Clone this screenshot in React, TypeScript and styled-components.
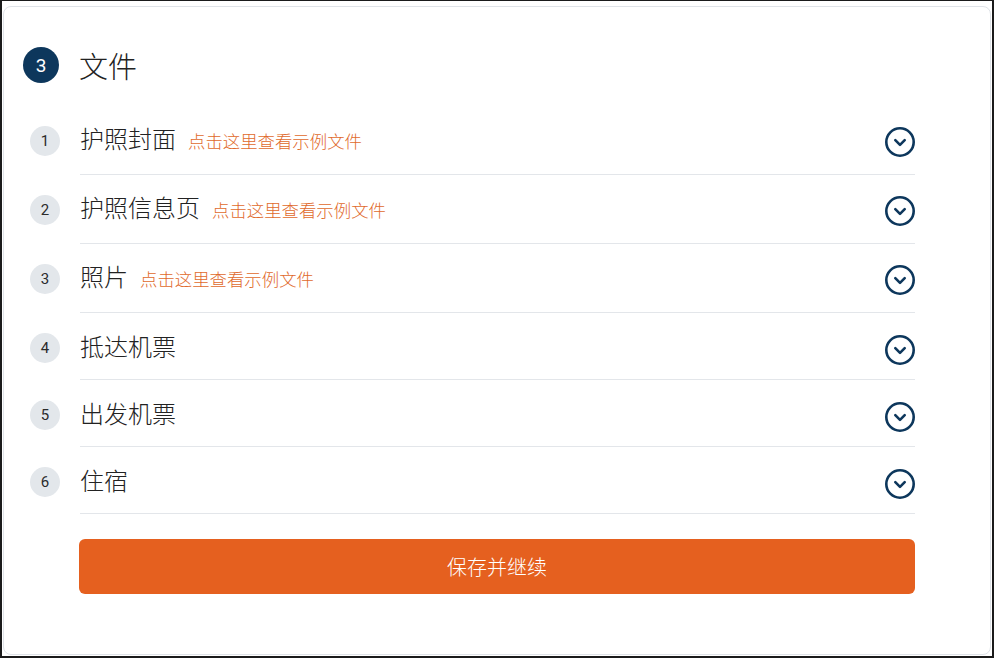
import React from "react";
import styled, { createGlobalStyle } from "styled-components";

const Global = createGlobalStyle`
  html, body { margin: 0; padding: 0; background: #ffffff; }
  body { font-family: "Noto Sans CJK SC", "Noto Sans", Roboto, sans-serif; }
  * { box-sizing: border-box; }
`;

const Frame = styled.div`
  width: 994px;
  height: 658px;
  border: 2px solid #1b1b1b;
  border-top-width: 1px;
  background: #ffffff;
  padding: 5px 1px 1px 1px;
  display: flex;
`;

const Card = styled.section`
  flex: 1;
  border: 1px solid #dfe3e8;
  border-radius: 8px;
  background: #ffffff;
  padding: 40px 75px 0 19px;
  display: flex;
  flex-direction: column;
`;

const Header = styled.div`
  display: flex;
  align-items: center;
  gap: 21px;
  height: 36px;
  margin-bottom: 23px;
`;

const StepBadge = styled.div`
  width: 36px;
  height: 36px;
  border-radius: 50%;
  background: #0d375c;
  color: #ffffff;
  display: flex;
  align-items: center;
  justify-content: center;
  font-family: Roboto, "Liberation Sans", sans-serif;
  font-size: 19px;
  font-weight: 400;
`;

const Title = styled.h2`
  margin: 0 0 0 -1px;
  font-size: 29px;
  font-weight: 300;
  color: #222;
  line-height: 1;
`;

const List = styled.div`
  display: flex;
  flex-direction: column;
  padding-left: 7px;
`;

const Row = styled.div`
  display: flex;
  align-items: flex-start;
  gap: 20px;
`;

const NumberBubble = styled.div`
  flex: none;
  width: 30px;
  height: 30px;
  margin-top: 20px;
  border-radius: 50%;
  background: #e3e7eb;
  color: #2b2b2b;
  display: flex;
  align-items: center;
  justify-content: center;
  font-family: Roboto, "Liberation Sans", sans-serif;
  font-size: 15px;
`;

const RowBody = styled.div<{ $tall: boolean }>`
  flex: 1;
  height: ${(p) => (p.$tall ? 69 : 67)}px;
  padding-top: ${(p) => (p.$tall ? 19 : 20)}px;
  border-bottom: 1px solid #e3e6ea;
  display: flex;
  align-items: flex-start;
  justify-content: space-between;
`;

const Label = styled.div`
  display: flex;
  align-items: baseline;
  gap: 12px;
  height: 32px;
  line-height: 32px;
  margin-top: -3px;
`;

const ItemName = styled.span`
  font-size: 24px;
  font-weight: 300;
  color: #222;
`;

const SampleLink = styled.a`
  font-size: 17.4px;
  font-weight: 300;
  color: #df6a2c;
  text-decoration: none;
  cursor: pointer;
`;

const Toggle = styled.button`
  border: none;
  background: none;
  padding: 0;
  width: 32px;
  height: 32px;
  margin-top: 1px;
  margin-right: -1px;
  cursor: pointer;
  display: flex;
`;

const SaveButton = styled.button`
  margin: 25px 0 0 56px;
  height: 55px;
  border: none;
  border-radius: 6px;
  background: #e5601f;
  color: #ffffff;
  font-family: "Noto Sans CJK SC", sans-serif;
  font-size: 20px;
  font-weight: 300;
  cursor: pointer;
`;

const ChevronCircle = () => (
  <svg width="32" height="32" viewBox="0 0 32 32" fill="none">
    <circle cx="16" cy="16" r="13.7" stroke="#0d375c" strokeWidth="2.6" />
    <path d="M11.3 14.2 L16 18.9 L20.7 14.2" stroke="#0d375c" strokeWidth="2.6" strokeLinecap="round" strokeLinejoin="round" />
  </svg>
);

const items: { name: string; link?: boolean }[] = [
  { name: "护照封面", link: true },
  { name: "护照信息页", link: true },
  { name: "照片", link: true },
  { name: "抵达机票" },
  { name: "出发机票" },
  { name: "住宿" },
];

export default function App() {
  return (
    <>
      <Global />
      <Frame>
        <Card>
          <Header>
            <StepBadge>3</StepBadge>
            <Title>文件</Title>
          </Header>
          <List>
            {items.map((it, i) => (
              <Row key={it.name}>
                <NumberBubble>{i + 1}</NumberBubble>
                <RowBody $tall={!!it.link}>
                  <Label>
                    <ItemName>{it.name}</ItemName>
                    {it.link && <SampleLink>点击这里查看示例文件</SampleLink>}
                  </Label>
                  <Toggle aria-label="展开">
                    <ChevronCircle />
                  </Toggle>
                </RowBody>
              </Row>
            ))}
          </List>
          <SaveButton>保存并继续</SaveButton>
        </Card>
      </Frame>
    </>
  );
}
